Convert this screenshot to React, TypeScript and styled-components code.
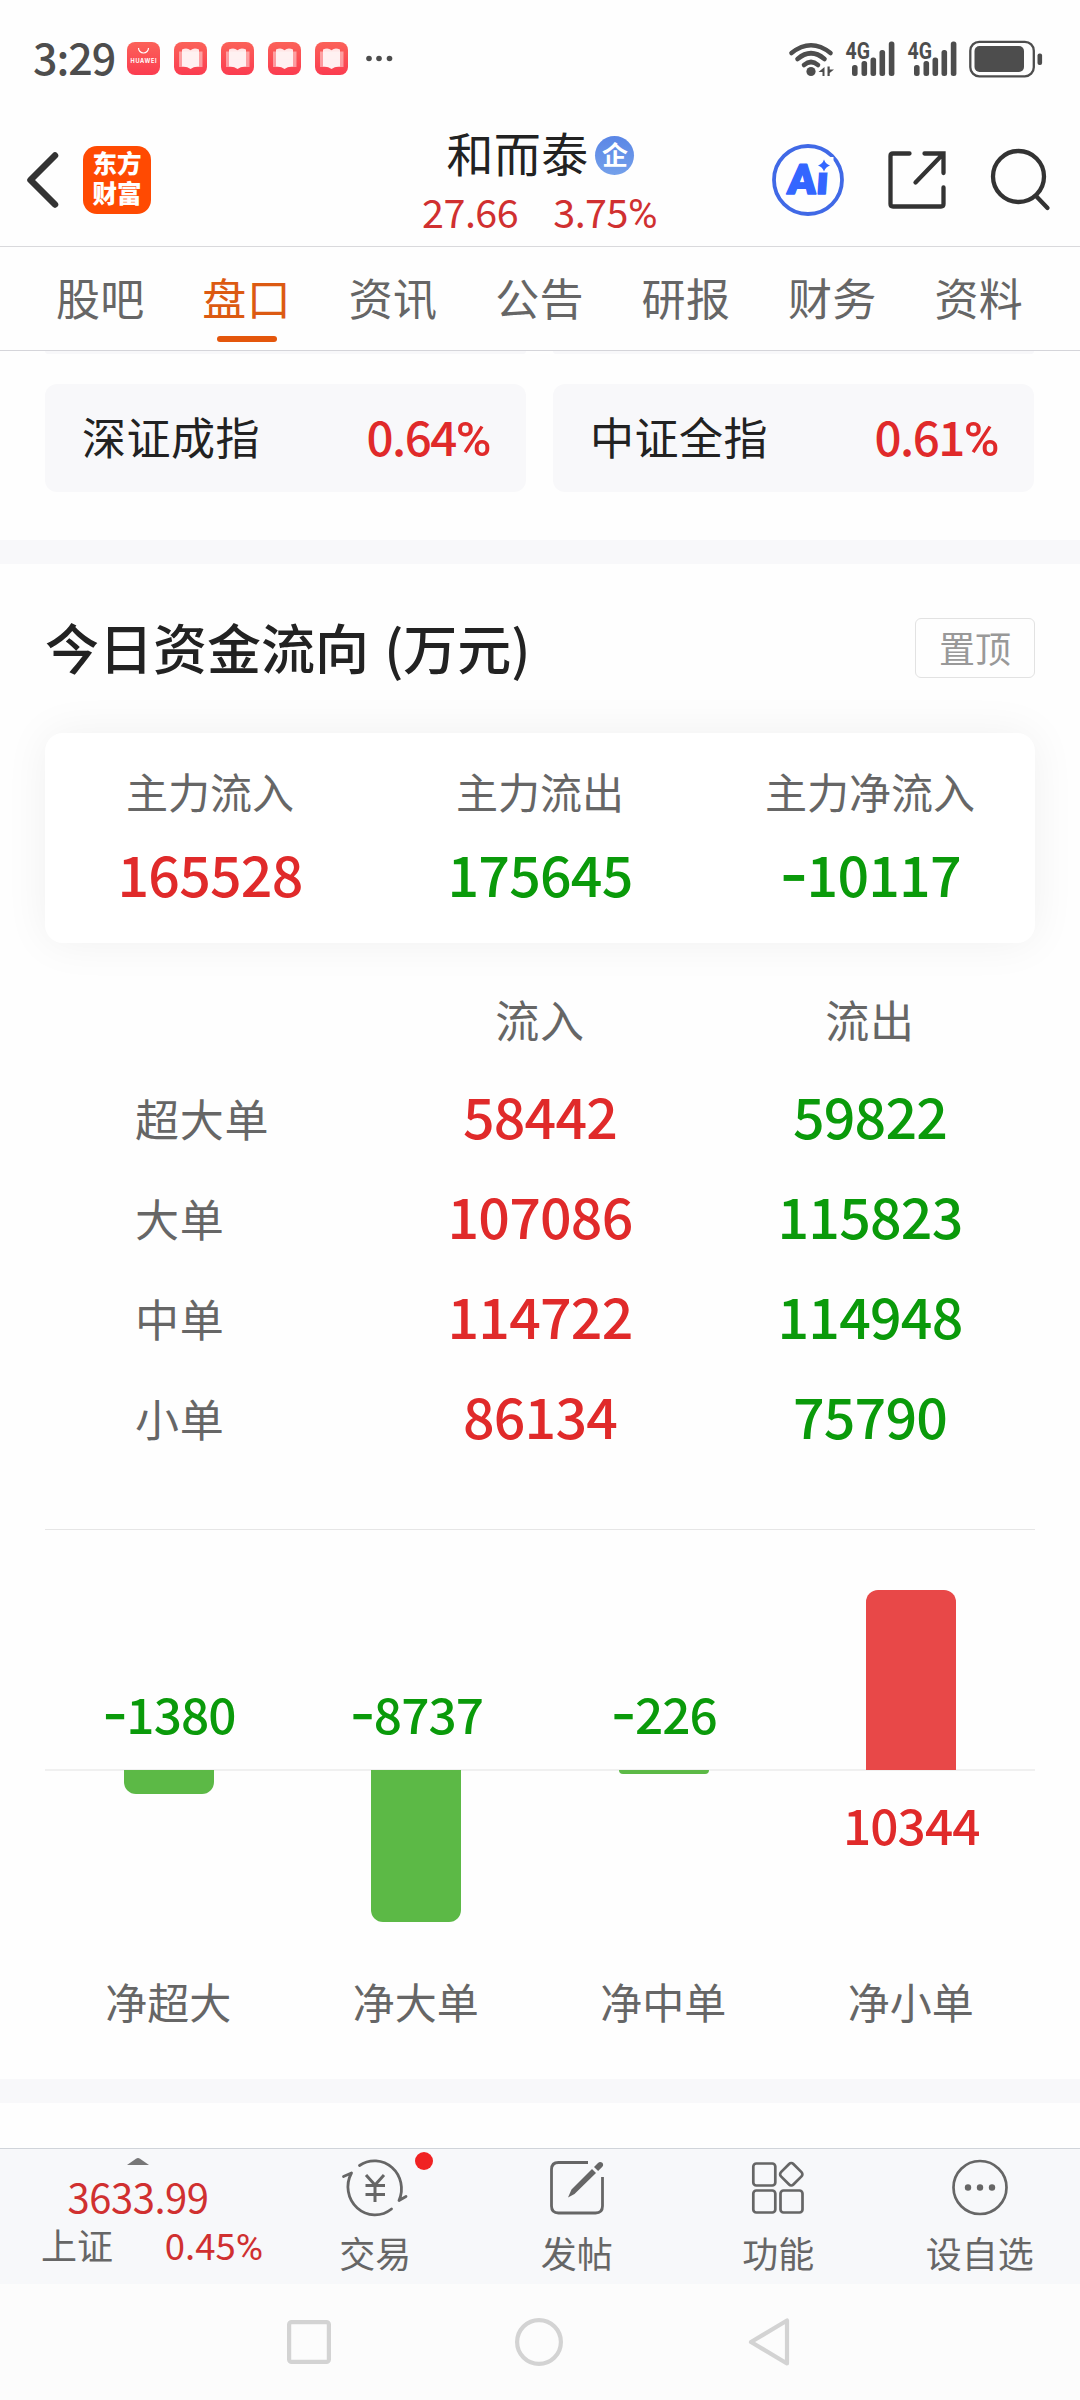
import React from "react";
import styled, { createGlobalStyle } from "styled-components";

const RED = "#e02a2a";
const GREEN = "#0a9a0a";
const GRAY = "#666";

const Global = createGlobalStyle`
  body { margin: 0; background: #fefefe; }
  * { box-sizing: border-box; }
`;

const Screen = styled.div`
  width: 1080px;
  height: 2400px;
  overflow: hidden;
  display: flex;
  flex-direction: column;
  background: #fefefe;
  color: #222;
  font-family: "Noto Sans CJK SC", sans-serif;
  white-space: nowrap;
`;

/* status bar */
const StatusBar = styled.div`
  height: 117px;
  flex: none;
  display: flex;
  align-items: center;
  padding: 0 37px 0 33px;
`;
const Clock = styled.span`
  font-size: 43px;
  line-height: 54px;
  font-weight: 500;
  letter-spacing: -1px;
  color: #4d4d4d;
  width: 94px;
  padding-bottom: 5px;
`;
const Notices = styled.div`
  display: flex;
  gap: 14px;
  flex: 1;
  align-items: center;
`;
const NoticeIcon = styled.svg`
  width: 33px;
  height: 33px;
  display: block;
`;
const StatusIcons = styled.svg`
  display: block;
  width: 254px;
  height: 38px;
  overflow: visible;
`;

/* header */
const Header = styled.header`
  height: 130px;
  flex: none;
  border-bottom: 1px solid #d9d9dc;
  display: grid;
  grid-template-columns: 1fr auto 1fr;
  align-items: center;
  padding: 0 30px 4px 27px;
`;
const HeaderSide = styled.div<{ $end?: boolean }>`
  display: flex;
  align-items: center;
  gap: ${(p) => (p.$end ? "44px" : "25px")};
  justify-content: ${(p) => (p.$end ? "flex-end" : "flex-start")};
`;
const Icon = styled.svg`
  display: block;
  flex: none;
  overflow: visible;
`;
const Logo = styled.div`
  width: 68px;
  height: 68px;
  border-radius: 14px;
  background: #ff4a02;
  color: #fff;
  font-weight: 900;
  font-size: 24.5px;
  line-height: 30px;
  display: flex;
  flex-direction: column;
  align-items: center;
  justify-content: center;
  padding-bottom: 3px;
`;
const Stock = styled.div`
  display: flex;
  flex-direction: column;
  align-items: center;
  padding-top: 2px;
`;
const StockName = styled.div`
  display: flex;
  align-items: center;
  gap: 7px;
  padding-left: 4px;
  font-size: 47px;
  letter-spacing: 0.3px;
  line-height: 59px;
`;
const Badge = styled.span`
  width: 39px;
  height: 39px;
  margin-top: 8px;
  border-radius: 50%;
  background: linear-gradient(#5a86e6, #74a0ea);
  color: #fff;
  font-size: 26px;
  letter-spacing: 0;
  line-height: 36px;
  font-weight: 700;
  text-align: center;
`;
const StockPrice = styled.div`
  display: flex;
  gap: 35px;
  padding-left: 2px;
  font-size: 39.5px;
  line-height: 59px;
  letter-spacing: -0.5px;
  color: #d03030;
`;
const Dash = styled.span`
  font-family: Inter, sans-serif;
  font-size: 1.14em;
  line-height: 0;
  letter-spacing: -0.03em;
`;
const Percent = styled.span`
  font-family: Roboto, sans-serif;
  font-size: 1.02em;
  line-height: 0;
`;

/* tabs */
const Tabs = styled.nav`
  height: 104px;
  flex: none;
  display: grid;
  grid-template-columns: repeat(7, 1fr);
  padding: 20px 28px 0 27px;
  border-bottom: 1px solid #d5d5da;
`;
const Tab = styled.div<{ $active?: boolean }>`
  display: flex;
  flex-direction: column;
  align-items: center;
  gap: 9px;
  font-size: 44px;
  letter-spacing: 0.3px;
  line-height: 60px;
  color: ${(p) => (p.$active ? "#dc5a12" : GRAY)};
  &::after {
    content: "";
    width: 60px;
    height: 6px;
    border-radius: 3px;
    background: ${(p) => (p.$active ? "#e4560c" : "transparent")};
  }
`;

/* index cards */
const IndexGrid = styled.div`
  display: grid;
  grid-template-columns: 1fr 1fr;
  column-gap: 27px;
  row-gap: 30px;
  padding: 0 46px 48px 45px;
`;
const IndexTail = styled.div`
  height: 3px;
  background: #f8f8fa;
  border-radius: 0 0 12px 12px;
`;
const IndexCard = styled.div`
  height: 108px;
  border-radius: 12px;
  background: #f8f8fa;
  padding: 0 36px 4px 37px;
  display: flex;
  align-items: center;
  justify-content: space-between;
  font-size: 44px;
  letter-spacing: 0.5px;
`;
const IndexChange = styled.span`
  font-size: 47.5px;
  line-height: 60px;
  font-weight: 500;
  letter-spacing: -1.5px;
  color: ${RED};
`;
const Band = styled.div`
  height: 24px;
  flex: none;
  background: #f8f8fa;
`;

/* fund flow */
const Section = styled.section`
  padding: 54px 45px 48px;
  display: flex;
  flex-direction: column;
`;
const SectionHead = styled.div`
  display: flex;
  justify-content: space-between;
  align-items: center;
  height: 60px;
`;
const Title = styled.h2`
  margin: 0;
  font-size: 54px;
  line-height: 60px;
  font-weight: 500;
  word-spacing: 3px;
  padding-bottom: 2px;
`;
const PinButton = styled.button`
  width: 120px;
  height: 60px;
  border: 1px solid #e2e2e2;
  border-radius: 6px;
  background: none;
  color: #999;
  font: 36px/50px "Noto Sans CJK SC", sans-serif;
  padding: 0 0 3px;
`;
const Summary = styled.div`
  margin-top: 55px;
  height: 210px;
  border-radius: 18px;
  background: #fff;
  box-shadow: 0 0 45px rgba(0, 0, 0, 0.06);
  display: grid;
  grid-template-columns: repeat(3, 1fr);
  padding-top: 28px;
`;
const SummaryCell = styled.div`
  display: flex;
  flex-direction: column;
  align-items: center;
  gap: 10px;
`;
const SummaryLabel = styled.span`
  font-size: 42px;
  line-height: 60px;
  color: ${GRAY};
`;
const Amount = styled.span<{ $up: boolean }>`
  font-size: 55.5px;
  line-height: 84px;
  font-weight: 500;
  letter-spacing: -0.8px;
  color: ${(p) => (p.$up ? RED : GREEN)};
`;
const FlowTable = styled.div`
  margin-top: 28px;
  padding-bottom: 64px;
  border-bottom: 1px solid #e6e6e6;
`;
const FlowRow = styled.div<{ $head?: boolean }>`
  height: ${(p) => (p.$head ? 94 : 100)}px;
  display: grid;
  grid-template-columns: repeat(3, 1fr);
  align-items: center;
  justify-items: center;
  font-size: 44px;
  letter-spacing: 0.7px;
  color: ${GRAY};
`;
const FlowHead = styled.span`
  padding-top: 1px;
`;
const FlowLabel = styled.span`
  justify-self: start;
  padding: 6px 0 0 90px;
`;

/* net flow chart */
const Chart = styled.div`
  position: relative;
  display: grid;
  grid-template-columns: repeat(4, 1fr);
  &::before {
    content: "";
    position: absolute;
    left: 0;
    right: 0;
    top: 239px;
    height: 2px;
    background: #f0f0f0;
  }
`;
const ChartColumn = styled.div`
  position: relative;
  display: flex;
  flex-direction: column;
  align-items: center;
`;
const Above = styled.div`
  height: 240px;
  display: flex;
  flex-direction: column;
  justify-content: flex-end;
`;
const Below = styled.div`
  height: 201px;
`;
const NetLabel = styled(SummaryLabel)`
  padding-right: 1px;
`;
const Bar = styled.div<{ $up: boolean }>`
  width: 90px;
  background: ${(p) => (p.$up ? "#e84848" : "#5cb946")};
  border-radius: ${(p) => (p.$up ? "12px 12px 0 0" : "0 0 12px 12px")};
`;
const NetValue = styled.div<{ $up: boolean }>`
  font-size: 49.5px;
  line-height: 60px;
  font-weight: 500;
  letter-spacing: -0.9px;
  color: ${(p) => (p.$up ? RED : GREEN)};
  margin: ${(p) => (p.$up ? "24px 0 0" : "0 0 27px")};
`;

/* bottom bar */
const Spacer = styled.div`
  flex: 1;
`;
const BottomBar = styled.footer`
  height: 136px;
  flex: none;
  border-top: 1px solid #d0d4da;
  background: #f7f8fa;
  display: grid;
  grid-template-columns: 274px repeat(4, 1fr);
`;
const MarketIndex = styled.div`
  display: flex;
  flex-direction: column;
  align-items: center;
  padding: 9px 0 0 2px;
  color: #d03030;
`;
const MarketPoint = styled.div`
  font-size: 40px;
  line-height: 50px;
  letter-spacing: -0.5px;
  margin-top: 6px;
`;
const MarketLine = styled.div`
  display: flex;
  justify-content: space-between;
  width: 222px;
  margin: -2px 0 0 28px;
  font-size: 36.5px;
  line-height: 50px;
`;
const MarketName = styled.span`
  font-size: 36px;
  color: ${GRAY};
`;
const MarketChange = styled.span`
  padding-top: 1px;
`;
const Action = styled.div`
  display: flex;
  flex-direction: column;
  align-items: center;
  padding: 9px 0 0 1px;
  gap: 11px;
  font-size: 36px;
  line-height: 50px;
  color: ${GRAY};
`;
const ActionIcon = styled.div`
  position: relative;
  height: 58px;
`;
const Dot = styled.i`
  position: absolute;
  left: 73px;
  top: -6px;
  width: 18px;
  height: 18px;
  border-radius: 50%;
  background: #f02222;
`;
const SystemNav = styled.div`
  height: 116px;
  flex: none;
  background: #fcfcfc;
  display: flex;
  justify-content: center;
  align-items: center;
  gap: 184.5px;
  padding-right: 4px;
`;

function Num({ children }: { children: string }) {
  return (
    <>
      {children.split(/([-%])/).map((part, i) =>
        part === "-" ? (
          <Dash key={i}>-</Dash>
        ) : part === "%" ? (
          <Percent key={i}>%</Percent>
        ) : (
          part
        )
      )}
    </>
  );
}

function NoticeBg({ id }: { id: string }) {
  return (
    <>
      <defs>
        <linearGradient id={id} x1="0" y1="0" x2="0" y2="1">
          <stop offset="0" stopColor="#fb6259" />
          <stop offset="1" stopColor="#fb3c50" />
        </linearGradient>
      </defs>
      <rect width="33" height="33" rx="8" fill={`url(#${id})`} />
    </>
  );
}

function StoreIcon() {
  return (
    <NoticeIcon viewBox="0 0 33 33">
      <NoticeBg id="store" />
      <path d="M11.5 6a5 5 0 0 0 10 0" fill="none" stroke="#fff" strokeWidth="1.2" />
      <text x="3.6" y="21" fontSize="5.6" fontWeight="700" textLength="26" fill="#fff" fontFamily="Inter, sans-serif">
        HUAWEI
      </text>
    </NoticeIcon>
  );
}

function ReaderIcon({ id }: { id: string }) {
  return (
    <NoticeIcon viewBox="0 0 33 33">
      <NoticeBg id={id} />
      <path d="M5 9.500h23.500v15.500h-9l-2.700 1.500-2.700-1.500H5z" fill="#fff" opacity=".45" />
      <path d="M8 7.500q5-2.500 8.500.8q3.500-3.300 8.500-.8v17q-5-.5-8.500 2.500q-3.500-3-8.500-2.500z" fill="#fff" opacity=".85" />
    </NoticeIcon>
  );
}

function Signal({ x }: { x: number }) {
  return (
    <g transform={`translate(${x} 0)`}>
      <text x="0" y="18.500" fontSize="23.500" fontWeight="700" textLength="24.500" lengthAdjust="spacingAndGlyphs" fill="#4d4d4d" fontFamily="Roboto, sans-serif">
        4G
      </text>
      <rect x="6.500" y="25" width="5.600" height="11" rx="2.500" />
      <rect x="16" y="21" width="5.600" height="15" rx="2.500" />
      <rect x="25" y="17.500" width="5.600" height="18.500" rx="2.500" />
      <rect x="34" y="10" width="5.600" height="26" rx="2.500" />
      <rect x="43.300" y="1.500" width="5.600" height="34.500" rx="2.500" />
    </g>
  );
}

const tabs = ["股吧", "盘口", "资讯", "公告", "研报", "财务", "资料"];
const summary = [
  { label: "主力流入", value: "165528", up: true },
  { label: "主力流出", value: "175645", up: false },
  { label: "主力净流入", value: "-10117", up: false },
];
const flows = [
  ["超大单", "58442", "59822"],
  ["大单", "107086", "115823"],
  ["中单", "114722", "114948"],
  ["小单", "86134", "75790"],
];
const nets = [
  { label: "净超大", value: -1380 },
  { label: "净大单", value: -8737 },
  { label: "净中单", value: -226 },
  { label: "净小单", value: 10344 },
];
const MAX_BAR = 180;
const peak = Math.max(...nets.map((n) => Math.abs(n.value)));

export default function App() {
  return (
    <Screen>
      <Global />
      <StatusBar>
        <Clock>3:29</Clock>
        <Notices>
          <StoreIcon />
          {["r1", "r2", "r3", "r4"].map((id) => (
            <ReaderIcon key={id} id={id} />
          ))}
          <Icon width="32" height="8" viewBox="0 0 32 8" fill="#4d4d4d">
            <circle cx="7" cy="3.500" r="2.800" />
            <circle cx="17" cy="3.500" r="2.800" />
            <circle cx="27.500" cy="3.500" r="2.800" />
          </Icon>
        </Notices>
        <StatusIcons viewBox="789 38.500 254 38" fill="#4d4d4d">
          <g fill="none" stroke="#4d4d4d" strokeWidth="4.600" strokeLinecap="round">
            <path d="M791.500 51.500q19.500-15.500 39 0" />
            <path d="M797.500 57.500q13.500-11.500 27 0" />
            <path d="M804 63.500q7-6 14 0" />
          </g>
          <circle cx="811" cy="70" r="4.600" />
          <path d="M818.500 70.500l6-5v9h-2v-4zM827.500 65h2.200v3h4.300l-4.300 3.500v3h-2.200z" />
          <g transform="translate(0 38.500)">
            <Signal x={845.5} />
            <Signal x={907.5} />
          </g>
          <rect x="970.300" y="40.300" width="63.500" height="34.500" rx="9" fill="none" stroke="#4d4d4d" strokeWidth="2.300" />
          <rect x="974.500" y="44.500" width="49.500" height="26" rx="5" />
          <rect x="1037.500" y="52" width="4.600" height="11.500" rx="2" />
        </StatusIcons>
      </StatusBar>

      <Header>
        <HeaderSide>
          <Icon width="31" height="56" viewBox="0 0 31 56" fill="none" stroke="#333" strokeWidth="6.500" strokeLinecap="round" strokeLinejoin="round">
            <path d="M28 3.500L3.500 28L28 52.500" />
          </Icon>
          <Logo>
            <span>东方</span>
            <span>财富</span>
          </Logo>
        </HeaderSide>
        <Stock>
          <StockName>
            和而泰<Badge>企</Badge>
          </StockName>
          <StockPrice>
            <span>27.66</span>
            <span>
              <Num>3.75%</Num>
            </span>
          </StockPrice>
        </Stock>
        <HeaderSide $end>
          <Icon width="72" height="72" viewBox="0 0 72 72">
            <circle cx="36" cy="36" r="34" fill="none" stroke="#4069e6" strokeWidth="3.800" />
            <g transform="translate(14.500 49.500) skewX(-4)" fill="#3366ff" stroke="#3366ff" strokeWidth="1.400" strokeLinejoin="round">
              <text fontFamily="Roboto, sans-serif" fontWeight="900" fontSize="42" textLength="41" lengthAdjust="spacingAndGlyphs">
                Ai
              </text>
            </g>
            <rect x="43.500" y="13" width="18" height="15.500" fill="#fefefe" />
            <path d="M52 15.500q1.500 4.500 6 6q-4.500 1.500-6 6q-1.500-4.500-6-6q4.500-1.500 6-6z" fill="#3366ff" />
          </Icon>
          <Icon width="58" height="58" viewBox="0 0 58 58" fill="none" stroke="#333" strokeWidth="4.300" strokeLinecap="round">
            <path d="M21.500 2.500H5q-2.500 0-2.500 2.500V53q0 2.500 2.500 2.500H53q2.500 0 2.500-2.500V36.500M36.500 2.500H55.500V22M55 3L27.500 31.500" />
          </Icon>
          <Icon width="60" height="62" viewBox="0 0 60 62" fill="none" stroke="#333" strokeWidth="4.300" strokeLinecap="round">
            <circle cx="28.500" cy="27.500" r="25.500" />
            <path d="M46.500 47.500L57.500 59" />
          </Icon>
        </HeaderSide>
      </Header>

      <Tabs>
        {tabs.map((t) => (
          <Tab key={t} $active={t === "盘口"}>
            {t}
          </Tab>
        ))}
      </Tabs>

      <IndexGrid>
        <IndexTail />
        <IndexTail />
        <IndexCard>
          深证成指
          <IndexChange>
            <Num>0.64%</Num>
          </IndexChange>
        </IndexCard>
        <IndexCard>
          中证全指
          <IndexChange>
            <Num>0.61%</Num>
          </IndexChange>
        </IndexCard>
      </IndexGrid>
      <Band />

      <Section>
        <SectionHead>
          <Title>今日资金流向 (万元)</Title>
          <PinButton>置顶</PinButton>
        </SectionHead>
        <Summary>
          {summary.map((s) => (
            <SummaryCell key={s.label}>
              <SummaryLabel>{s.label}</SummaryLabel>
              <Amount $up={s.up}>
                <Num>{s.value}</Num>
              </Amount>
            </SummaryCell>
          ))}
        </Summary>
        <FlowTable>
          <FlowRow $head>
            <span />
            <FlowHead>流入</FlowHead>
            <FlowHead>流出</FlowHead>
          </FlowRow>
          {flows.map(([label, inflow, outflow]) => (
            <FlowRow key={label}>
              <FlowLabel>{label}</FlowLabel>
              <Amount $up>{inflow}</Amount>
              <Amount $up={false}>{outflow}</Amount>
            </FlowRow>
          ))}
        </FlowTable>
        <Chart>
          {nets.map((n) => {
            const up = n.value > 0;
            const bar = <Bar $up={up} style={{ height: Math.round((Math.abs(n.value) / peak) * MAX_BAR) }} />;
            const value = (
              <NetValue $up={up}>
                <Num>{String(n.value)}</Num>
              </NetValue>
            );
            return (
              <ChartColumn key={n.label}>
                <Above>{up ? bar : value}</Above>
                <Below>{up ? value : bar}</Below>
                <NetLabel>{n.label}</NetLabel>
              </ChartColumn>
            );
          })}
        </Chart>
      </Section>
      <Band />
      <Spacer />

      <BottomBar>
        <MarketIndex>
          <Icon width="22" height="7" viewBox="0 0 22 7">
            <path d="M0 7L9 .700q2-1.400 4 0L22 7z" fill="#777" />
          </Icon>
          <MarketPoint>3633.99</MarketPoint>
          <MarketLine>
            <MarketName>上证</MarketName>
            <MarketChange>
              <Num>0.45%</Num>
            </MarketChange>
          </MarketLine>
        </MarketIndex>
        <Action>
          <ActionIcon>
            <Icon width="66" height="58" viewBox="0 0 66 58" fill="none" stroke="#666" strokeWidth="2.800" strokeLinecap="round" strokeLinejoin="round">
              <path d="M17.500 7.500A27 28 0 0 1 57 42.500L64 38.500" />
              <path d="M49.500 51A27 28 0 0 1 9.500 15L1.500 18.500" />
              <path d="M24 17L33 27L42 17M33 27V44M23.500 27.500H43M23.500 36.500H43" strokeLinecap="butt" strokeWidth="3" />
            </Icon>
            <Dot />
          </ActionIcon>
          交易
        </Action>
        <Action>
          <ActionIcon>
            <Icon width="56" height="58" viewBox="0 0 56 58">
              <path d="M39 4.500H9.500q-7 0-7 7V48q0 7 7 7H46.500q7 0 7-7V19" fill="none" stroke="#666" strokeWidth="2.800" />
              <path d="M19 39.500l3.500-8L43 11l4 4L25.500 36zM45 9l4-4q2-2 4.300-.200q1.800 2.200-.2 4.200l-4 4z" fill="#666" />
            </Icon>
          </ActionIcon>
          发帖
        </Action>
        <Action>
          <ActionIcon>
            <Icon width="54" height="58" viewBox="0 0 54 58" fill="none" stroke="#666" strokeWidth="2.700">
              <rect x="2.300" y="5.500" width="22" height="22" rx="3" />
              <rect x="2.300" y="32.500" width="22" height="22" rx="3" />
              <rect x="29.500" y="32.500" width="22" height="22" rx="3" />
              <rect x="31.500" y="7.500" width="17.500" height="17.500" rx="3" transform="rotate(45 40.250 16.250)" />
            </Icon>
          </ActionIcon>
          功能
        </Action>
        <Action>
          <ActionIcon>
            <Icon width="58" height="58" viewBox="0 0 58 58">
              <circle cx="29" cy="29.500" r="26.500" fill="none" stroke="#666" strokeWidth="2.700" />
              <g fill="#666">
                <circle cx="17" cy="29.500" r="3.200" />
                <circle cx="29" cy="29.500" r="3.200" />
                <circle cx="41" cy="29.500" r="3.200" />
              </g>
            </Icon>
          </ActionIcon>
          设自选
        </Action>
      </BottomBar>

      <SystemNav>
        <Icon width="44" height="44" viewBox="0 0 44 44" fill="none" stroke="#d3d3d3" strokeWidth="4.200">
          <rect x="2.100" y="2.100" width="39.800" height="39.800" rx="2.500" />
        </Icon>
        <Icon width="48" height="48" viewBox="0 0 48 48" fill="none" stroke="#d3d3d3" strokeWidth="4.200">
          <circle cx="24" cy="24" r="21.900" />
        </Icon>
        <Icon width="42" height="48" viewBox="0 0 42 48" fill="none" stroke="#d3d3d3" strokeWidth="4.200" strokeLinejoin="round">
          <path d="M39 2.500V45.500L3 24z" />
        </Icon>
      </SystemNav>
    </Screen>
  );
}
